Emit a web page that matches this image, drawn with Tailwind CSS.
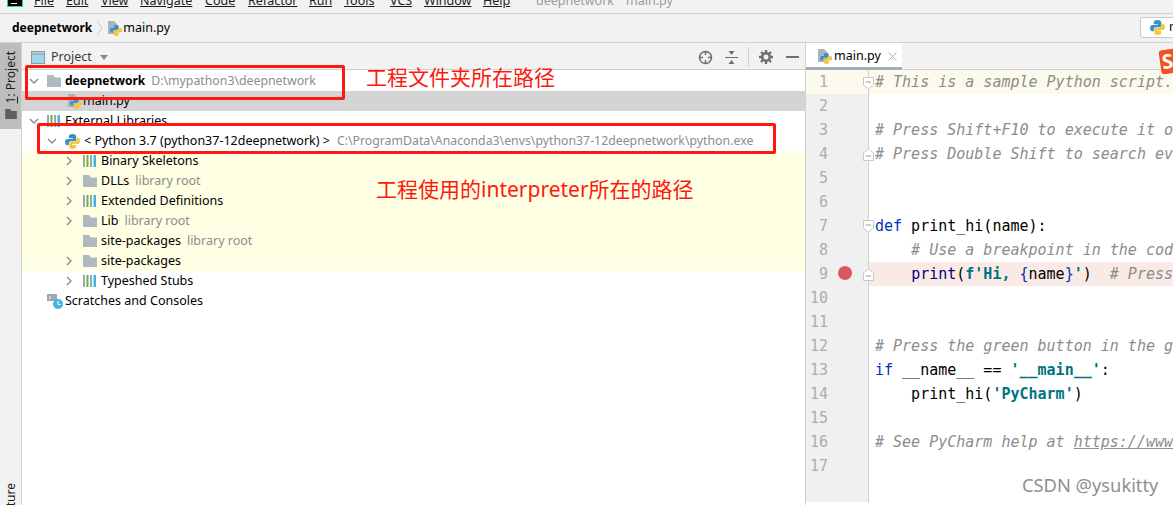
<!DOCTYPE html>
<html lang="zh">
<head>
  <meta charset="UTF-8">
  <title>deepnetwork - main.py</title>
  <script src="https://cdn.jsdelivr.net/npm/@tailwindcss/browser@4"></script>
</head>
<body class="w-[1173px] h-[505px] overflow-hidden bg-white relative font-['Noto_Sans','Noto_Sans_CJK_SC',sans-serif] text-[12.5px] text-black">

  <!-- shared icons -->
  <svg class="hidden">
    <symbol id="py" viewBox="0 0 16 16">
      <path fill="#3c8fc4" d="M8 1C5.500 1 4.500 2 4.500 3.300V5H8.500V5.700H3C1.700 5.700 1 7 1 8.500S1.700 11.500 3 11.500H4.500V9.800C4.500 8.600 5.400 7.800 6.500 7.800H10C10.900 7.800 11.500 7.200 11.500 6.300V3.300C11.500 2 10.300 1 8 1Z"/>
      <path fill="#f5c63a" d="M8 15C10.500 15 11.500 14 11.500 12.700V11H7.500V10.300H13C14.300 10.300 15 9 15 7.500S14.300 4.500 13 4.500H12V6.300C12 7.500 11.100 8.300 10 8.300H6.500C5.600 8.300 5 8.900 5 9.800V12.700C5 14 5.700 15 8 15Z"/>
    </symbol>
    <symbol id="file" viewBox="0 0 16 16">
      <path fill="#a9b4bc" d="M1 1H7L10 4V14H1Z"/>
      <path fill="#3c8fc4" d="M9.500 5C7.800 5 7 5.700 7 6.700V8H4.800C3.800 8 3.200 9 3.200 10.200S3.800 12.400 4.800 12.400H6V11C6 10.200 6.700 9.700 7.500 9.700H10.500C11.200 9.700 11.700 9.200 11.700 8.500V6.700C11.700 5.700 11 5 9.500 5Z"/>
      <path fill="#f5c63a" d="M9.500 16C11.200 16 12 15.300 12 14.300V13H9V12.500H13.600C14.600 12.500 15.200 11.500 15.200 10.300S14.600 8.100 13.600 8.100H12.300V8.800C12.300 9.600 11.600 10.200 10.800 10.200H8C7.300 10.200 6.800 10.700 6.800 11.400V14.300C6.800 15.300 7.700 16 9.500 16Z"/>
    </symbol>
    <symbol id="folder" viewBox="0 0 14 12">
      <path fill="#aeb9c0" d="M0 0H6L8 2.500H14V12H0Z"/>
    </symbol>
    <symbol id="lib" viewBox="0 0 14 12">
      <rect x="0" y="0" width="2" height="12" fill="#9aa7b0"/>
      <rect x="3.500" y="0" width="2" height="12" fill="#62b543"/>
      <rect x="7" y="0" width="2" height="12" fill="#9aa7b0"/>
      <rect x="10.500" y="0" width="2.500" height="12" fill="#40b6e0"/>
    </symbol>
    <symbol id="right" viewBox="0 0 10 10">
      <path fill="none" stroke="#7f8b91" stroke-width="1.300" d="M3 1L7 5L3 9"/>
    </symbol>
    <symbol id="down" viewBox="0 0 10 10">
      <path fill="none" stroke="#7f8b91" stroke-width="1.300" d="M1 3L5 7L9 3"/>
    </symbol>
    <symbol id="foldtop" viewBox="0 0 11 13">
      <path fill="#fff" stroke="#c8c8c8" d="M.5 .5H10.500V8L5.500 12L.5 8Z"/>
      <path stroke="#9a9a9a" d="M3 5H8"/>
    </symbol>
    <symbol id="foldend" viewBox="0 0 11 13">
      <path fill="#fff" stroke="#c8c8c8" d="M.5 12.500H10.500V5L5.500 1L.5 5Z"/>
      <path stroke="#9a9a9a" d="M3 8H8"/>
    </symbol>
  </svg>

  <!-- menu bar, cut by the top of the screenshot -->
  <div class="h-[14px] overflow-hidden bg-[#f2f2f2] border-b border-[#d1d1d1] flex">
    <div class="w-[34px] shrink-0 pl-[7px]"><div class="w-[16px] h-[7px] bg-black border border-[#21d789] border-t-0 pt-[3px] pl-[3px]"><div class="w-[6px] h-[1px] bg-white"></div></div></div>
    <div class="flex -mt-[9px] h-[20px] leading-[20px] text-[#1c1c1c] whitespace-nowrap">
      <span class="w-[32px] underline">File</span>
      <span class="w-[35px] underline">Edit</span>
      <span class="w-[39px] underline">View</span>
      <span class="w-[65px] underline">Navigate</span>
      <span class="w-[43px] underline">Code</span>
      <span class="w-[61px] underline">Refactor</span>
      <span class="w-[35px] underline">Run</span>
      <span class="w-[46px] underline">Tools</span>
      <span class="w-[34px] underline">VCS</span>
      <span class="w-[59px] underline">Window</span>
      <span class="w-[53px] underline">Help</span>
      <span class="w-[90px] text-[#9b9b9b]">deepnetwork</span>
      <span class="text-[#9b9b9b]">main.py</span>
    </div>
  </div>

  <!-- navigation bar -->
  <div class="h-[29px] bg-[#f2f2f2] border-b border-[#d1d1d1] flex items-center pl-[12px] relative">
    <span class="font-bold text-[12px]">deepnetwork</span>
    <svg class="ml-[4px] w-[7px] h-[16px]" viewBox="0 0 7 16"><path fill="none" stroke="#c4c4c4" d="M1 1L6 8L1 15"/></svg>
    <svg class="ml-[4px] w-[16px] h-[16px]"><use href="#file"/></svg>
    <span>main.py</span>
    <div class="absolute left-[1140px] top-[3px] w-[40px] h-[21px] bg-white border border-[#c9c9c9] rounded-[3px] flex items-center pl-[8px] overflow-hidden">
      <svg class="w-[17px] h-[17px] shrink-0"><use href="#py"/></svg>
      <span class="ml-[3px]">main</span>
    </div>
  </div>

  <div class="flex h-[462px]">
    <!-- left tool stripe -->
    <div class="w-[22px] shrink-0 bg-[#f2f2f2] border-r border-[#d1d1d1] flex flex-col overflow-hidden">
      <div class="h-[86px] bg-[#bdbdbd] flex flex-col items-center pt-[8px]">
        <span class="[writing-mode:vertical-rl] rotate-180 text-[12px] leading-[14px] text-[#1c1c1c] whitespace-nowrap"><span class="underline">1</span>: Project</span>
        <svg class="mt-[6px] w-[12px] h-[10px]" viewBox="0 0 14 12"><path fill="#5f5f5f" d="M0 0H6L8 2.500H14V12H0Z"/></svg>
      </div>
      <span class="mt-auto -mb-[30px] self-center [writing-mode:vertical-rl] rotate-180 text-[12px] leading-[14px] text-[#1c1c1c] whitespace-nowrap">Structure</span>
    </div>

    <!-- project panel -->
    <div class="w-[784px] shrink-0 border-r border-[#d1d1d1] flex flex-col">
      <div class="h-[27px] bg-[#f2f2f2] border-b border-[#d1d1d1] flex items-center pl-[9px] pt-[2px]">
        <svg class="w-[14px] h-[13px]" viewBox="0 0 14 13"><rect x=".5" y=".5" width="13" height="12" fill="#9fd6ef" stroke="#8c9aa3"/><rect x=".5" y=".5" width="13" height="2.500" fill="#c9d2d8" stroke="#8c9aa3"/></svg>
        <span class="ml-[6px] text-[#3a3a3a]">Project</span>
        <svg class="ml-[8px] w-[8px] h-[5px]" viewBox="0 0 8 5"><path fill="#7f8b91" d="M0 0H8L4 5Z"/></svg>
        <div class="ml-auto flex items-center pr-[6px]">
          <svg class="w-[15px] h-[15px]" viewBox="0 0 15 15"><circle cx="7.500" cy="7.500" r="6" fill="none" stroke="#6e6e6e" stroke-width="1.500"/><path stroke="#6e6e6e" stroke-width="1.500" d="M7.500 1V5M7.500 10V14M1 7.500H5M10 7.500H14"/></svg>
          <svg class="ml-[12px] w-[13px] h-[13px]" viewBox="0 0 13 13"><path stroke="#6e6e6e" d="M0 6.500H13"/><path fill="#6e6e6e" d="M3.500 0H9.500L6.500 4ZM3.500 13H9.500L6.500 9Z"/></svg>
          <div class="ml-[10px] w-px h-[20px] bg-[#d1d1d1]"></div>
          <svg class="ml-[10px] w-[14px] h-[14px]" viewBox="0 0 14 14"><circle cx="7" cy="7" r="3.800" fill="none" stroke="#6e6e6e" stroke-width="2.600"/><path stroke="#6e6e6e" stroke-width="2.400" d="M7 0V3M7 11V14M0 7H3M11 7H14M2 2L4 4M10 10L12 12M12 2L10 4M4 10L2 12"/></svg>
          <div class="ml-[13px] w-[13px] h-[2px] bg-[#6e6e6e]"></div>
        </div>
      </div>

      <div class="pt-[1px] whitespace-nowrap leading-[20px]">
        <div class="h-[20px] flex items-center pl-[7px]">
          <svg class="w-[10px] h-[10px]"><use href="#down"/></svg>
          <svg class="ml-[8px] w-[14px] h-[12px]"><use href="#folder"/></svg>
          <span class="ml-[4px] font-bold text-[12px]">deepnetwork</span>
          <span class="ml-[6px] text-[#8c8c8c] text-[12.3px]">D:\mypathon3\deepnetwork</span>
        </div>
        <div class="h-[20px] bg-[#d4d4d4] flex items-center pl-[45px]">
          <svg class="w-[16px] h-[16px]"><use href="#file"/></svg>
          <span>main.py</span>
        </div>
        <div class="h-[20px] flex items-center pl-[7px]">
          <svg class="w-[10px] h-[10px]"><use href="#down"/></svg>
          <svg class="ml-[8px] w-[14px] h-[12px]"><use href="#lib"/></svg>
          <span class="ml-[4px]">External Libraries</span>
        </div>
        <div class="h-[20px] flex items-center pl-[25px]">
          <svg class="w-[10px] h-[10px]"><use href="#down"/></svg>
          <svg class="ml-[7px] w-[17px] h-[17px]"><use href="#py"/></svg>
          <span class="ml-[3px]">&lt; Python 3.7 (python37-12deepnetwork) &gt;</span>
          <span class="ml-[7px] text-[#8c8c8c] text-[12.3px]">C:\ProgramData\Anaconda3\envs\python37-12deepnetwork\python.exe</span>
        </div>
        <div class="bg-[#ffffe4]">
          <div class="h-[20px] flex items-center pl-[42px]">
            <svg class="w-[10px] h-[10px]"><use href="#right"/></svg>
            <svg class="ml-[9px] w-[14px] h-[12px]"><use href="#lib"/></svg>
            <span class="ml-[4px]">Binary Skeletons</span>
          </div>
          <div class="h-[20px] flex items-center pl-[42px]">
            <svg class="w-[10px] h-[10px]"><use href="#right"/></svg>
            <svg class="ml-[9px] w-[14px] h-[12px]"><use href="#folder"/></svg>
            <span class="ml-[4px]">DLLs</span>
            <span class="ml-[6px] text-[#8c8c8c]">library root</span>
          </div>
          <div class="h-[20px] flex items-center pl-[42px]">
            <svg class="w-[10px] h-[10px]"><use href="#right"/></svg>
            <svg class="ml-[9px] w-[14px] h-[12px]"><use href="#lib"/></svg>
            <span class="ml-[4px]">Extended Definitions</span>
          </div>
          <div class="h-[20px] flex items-center pl-[42px]">
            <svg class="w-[10px] h-[10px]"><use href="#right"/></svg>
            <svg class="ml-[9px] w-[14px] h-[12px]"><use href="#folder"/></svg>
            <span class="ml-[4px]">Lib</span>
            <span class="ml-[6px] text-[#8c8c8c]">library root</span>
          </div>
          <div class="h-[20px] flex items-center pl-[61px]">
            <svg class="w-[14px] h-[12px]"><use href="#folder"/></svg>
            <span class="ml-[4px]">site-packages</span>
            <span class="ml-[6px] text-[#8c8c8c]">library root</span>
          </div>
          <div class="h-[20px] flex items-center pl-[42px]">
            <svg class="w-[10px] h-[10px]"><use href="#right"/></svg>
            <svg class="ml-[9px] w-[14px] h-[12px]"><use href="#folder"/></svg>
            <span class="ml-[4px]">site-packages</span>
          </div>
        </div>
        <div class="h-[20px] flex items-center pl-[42px]">
          <svg class="w-[10px] h-[10px]"><use href="#right"/></svg>
          <svg class="ml-[9px] w-[14px] h-[12px]"><use href="#lib"/></svg>
          <span class="ml-[4px]">Typeshed Stubs</span>
        </div>
        <div class="h-[20px] flex items-center pl-[25px]">
          <svg class="w-[16px] h-[16px]" viewBox="0 0 16 16"><path fill="#9aa7b0" d="M0 1H10V8H0Z"/><path fill="none" stroke="#fff" d="M2 3L4 4.500L2 6"/><circle cx="11" cy="11" r="5" fill="#40b6e0"/><path fill="none" stroke="#fff" d="M11 8V11.500H13.500"/></svg>
          <span class="ml-[2px]">Scratches and Consoles</span>
        </div>
      </div>
    </div>

    <!-- editor -->
    <div class="flex-1 min-w-0 flex flex-col overflow-hidden">
      <div class="h-[27px] bg-[#f2f2f2] border-b border-[#d1d1d1] flex shrink-0">
        <div class="w-[96px] h-[27px] bg-white border-b-[3px] border-[#a6adb8] flex items-center pl-[11px] pt-[2px]">
          <svg class="w-[16px] h-[16px]"><use href="#file"/></svg>
          <span class="ml-[1px]">main.py</span>
          <svg class="ml-[7px] w-[9px] h-[9px]" viewBox="0 0 9 9"><path stroke="#b5b5b5" d="M.5 .5L8.500 8.500M8.500 .5L.5 8.500"/></svg>
        </div>
      </div>

      <div class="font-['DejaVu_Sans_Mono',monospace] text-[15px] leading-[24px]">
        <div class="flex h-6 bg-[#fcfaed]"><div class="w-[63px] shrink-0 border-r border-[#d1d1d1] text-[#adadad] pl-[13px] relative">1<svg class="absolute left-[57px] top-[7px] w-[11px] h-[13px]"><use href="#foldtop"/></svg></div><span class="pl-[6px] whitespace-pre italic text-[#8c8c8c]"># This is a sample Python script.</span></div>
        <div class="flex h-6"><div class="w-[63px] shrink-0 bg-[#f0f0f0] border-r border-[#d1d1d1] text-[#adadad] pl-[13px]">2</div></div>
        <div class="flex h-6"><div class="w-[63px] shrink-0 bg-[#f0f0f0] border-r border-[#d1d1d1] text-[#adadad] pl-[13px]">3</div><span class="pl-[6px] whitespace-pre italic text-[#8c8c8c]"># Press Shift+F10 to execute it or replace it</span></div>
        <div class="flex h-6"><div class="w-[63px] shrink-0 bg-[#f0f0f0] border-r border-[#d1d1d1] text-[#adadad] pl-[13px] relative">4<svg class="absolute left-[57px] top-[6px] w-[11px] h-[13px]"><use href="#foldend"/></svg></div><span class="pl-[6px] whitespace-pre italic text-[#8c8c8c]"># Press Double Shift to search everywhere</span></div>
        <div class="flex h-6"><div class="w-[63px] shrink-0 bg-[#f0f0f0] border-r border-[#d1d1d1] text-[#adadad] pl-[13px]">5</div></div>
        <div class="flex h-6"><div class="w-[63px] shrink-0 bg-[#f0f0f0] border-r border-[#d1d1d1] text-[#adadad] pl-[13px]">6</div></div>
        <div class="flex h-6"><div class="w-[63px] shrink-0 bg-[#f0f0f0] border-r border-[#d1d1d1] text-[#adadad] pl-[13px] relative">7<svg class="absolute left-[57px] top-[6px] w-[11px] h-[13px]"><use href="#foldtop"/></svg></div><span class="pl-[6px] whitespace-pre"><span class="text-[#0033b3]">def</span> print_hi(name):</span></div>
        <div class="flex h-6"><div class="w-[63px] shrink-0 bg-[#f0f0f0] border-r border-[#d1d1d1] text-[#adadad] pl-[13px]">8</div><span class="pl-[6px] whitespace-pre italic text-[#8c8c8c]">    # Use a breakpoint in the code line below</span></div>
        <div class="flex h-6 bg-[#faeae6]"><div class="w-[63px] shrink-0 bg-[#f0f0f0] border-r border-[#d1d1d1] text-[#adadad] pl-[13px] relative">9<div class="absolute left-[32px] top-[4px] w-[14px] h-[14px] rounded-full bg-[#db5860]"></div><svg class="absolute left-[57px] top-[6px] w-[11px] h-[13px]"><use href="#foldend"/></svg></div><span class="pl-[6px] whitespace-pre">    <span class="text-[#000080]">print</span>(<span class="text-[#00737f] font-bold">f'Hi, </span><span class="text-[#0033b3]">{</span>name<span class="text-[#0033b3]">}</span><span class="text-[#00737f] font-bold">'</span>)  <span class="italic text-[#8c8c8c]"># Press Ctrl+F8</span></span></div>
        <div class="flex h-6"><div class="w-[63px] shrink-0 bg-[#f0f0f0] border-r border-[#d1d1d1] text-[#adadad] pl-[4px]">10</div></div>
        <div class="flex h-6"><div class="w-[63px] shrink-0 bg-[#f0f0f0] border-r border-[#d1d1d1] text-[#adadad] pl-[4px]">11</div></div>
        <div class="flex h-6"><div class="w-[63px] shrink-0 bg-[#f0f0f0] border-r border-[#d1d1d1] text-[#adadad] pl-[4px]">12</div><span class="pl-[6px] whitespace-pre italic text-[#8c8c8c]"># Press the green button in the gutter</span></div>
        <div class="flex h-6"><div class="w-[63px] shrink-0 bg-[#f0f0f0] border-r border-[#d1d1d1] text-[#adadad] pl-[4px]">13</div><span class="pl-[6px] whitespace-pre"><span class="text-[#0033b3]">if</span> __name__ == <span class="text-[#00737f] font-bold">'__main__'</span>:</span></div>
        <div class="flex h-6"><div class="w-[63px] shrink-0 bg-[#f0f0f0] border-r border-[#d1d1d1] text-[#adadad] pl-[4px]">14</div><span class="pl-[6px] whitespace-pre">    print_hi(<span class="text-[#00737f] font-bold">'PyCharm'</span>)</span></div>
        <div class="flex h-6"><div class="w-[63px] shrink-0 bg-[#f0f0f0] border-r border-[#d1d1d1] text-[#adadad] pl-[4px]">15</div></div>
        <div class="flex h-6"><div class="w-[63px] shrink-0 bg-[#f0f0f0] border-r border-[#d1d1d1] text-[#adadad] pl-[4px]">16</div><span class="pl-[6px] whitespace-pre italic text-[#8c8c8c]"># See PyCharm help at <span class="underline">https://www.jetbrains.com</span></span></div>
        <div class="flex h-6"><div class="w-[63px] shrink-0 bg-[#f0f0f0] border-r border-[#d1d1d1] text-[#adadad] pl-[4px]">17</div></div>
        <div class="flex h-6"><div class="w-[63px] shrink-0 bg-[#f0f0f0] border-r border-[#d1d1d1]"></div></div>
      </div>
    </div>
  </div>

  <!-- hand-drawn annotations on the screenshot -->
  <div class="absolute left-[25px] top-[65px] w-[320px] h-[35px] border-[3px] border-[#fc1a0f] rounded-[2px]"></div>
  <div class="absolute left-[37px] top-[123px] w-[739px] h-[31px] border-[3px] border-[#fc1a0f] rounded-[2px]"></div>
  <div class="absolute left-[366px] top-[63px] text-[21px] leading-[28px] text-[#fc1a0f] whitespace-nowrap">工程文件夹所在路径</div>
  <div class="absolute left-[376px] top-[175px] text-[21px] leading-[28px] text-[#fc1a0f] whitespace-nowrap">工程使用的interpreter所在的路径</div>

  <!-- input method badge, right edge -->
  <div class="absolute left-[1160px] top-[49px] w-[24px] h-[24px] bg-[#f2521d] rounded-[3px] -rotate-[8deg] flex items-center pl-[2px]"><span class="text-white font-bold text-[20px] leading-none">S</span></div>

  <!-- watermark -->
  <div class="absolute left-[1022px] top-[473px] text-[18.3px] leading-[24px] text-[#8f8f8f] whitespace-nowrap">CSDN @ysukitty</div>
</body>
</html>
